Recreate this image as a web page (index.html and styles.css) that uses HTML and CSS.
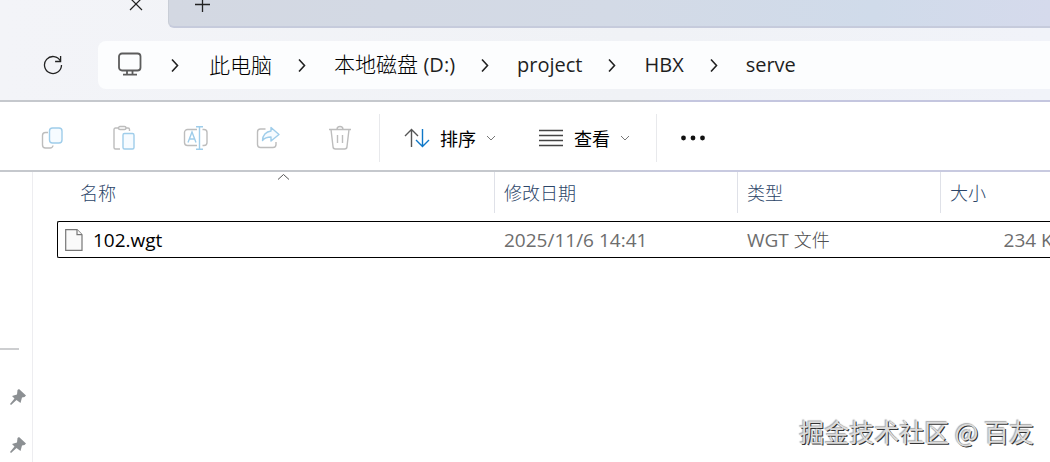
FILE: index.html
```
<!DOCTYPE html>
<html lang="zh-CN">
<head>
<meta charset="utf-8">
<meta name="viewport" content="width=device-width, initial-scale=1">
<title>serve</title>
<link rel="stylesheet" href="styles.css">
</head>
<body>
<div class="window">
  <header class="chrome">
    <div class="tabs">
      <div class="tab">
        <button class="icon-button" aria-label="关闭标签页"><svg width="14" height="14" viewBox="0 0 14 14"><path d="M1 1l12 12M13 1L1 13" stroke="#222" stroke-width="1.2" fill="none"/></svg></button>
      </div>
      <div class="tab-strip">
        <button class="icon-button" aria-label="新建标签页"><svg width="16" height="16" viewBox="0 0 16 16"><path d="M7.500 0v16M0 8.500h15" stroke="#222" stroke-width="1.300" fill="none"/></svg></button>
      </div>
    </div>
    <div class="address-row">
      <button class="icon-button refresh" aria-label="刷新"><svg width="20" height="20" viewBox="0 0 20 20" fill="none" stroke="#222" stroke-width="1.300"><path d="M17.500 6A8.500 8.500 0 1 0 18.500 10"/><path d="M17.600 1v5.500h-5.500"/></svg></button>
      <nav class="address" aria-label="路径">
        <svg class="pc" width="26" height="26" viewBox="0 0 26 26" fill="none" stroke="#5c5c5c" stroke-width="1.800"><rect x="2" y="1.500" width="21.500" height="17" rx="3"/><path d="M10 18.500v4M15.500 18.500v4M6 22.600h14"/></svg>
        <svg class="chevron" width="12" height="14" viewBox="0 0 12 14"><path d="M3 1.500L8.500 7.500 3 13.500"/></svg>
        <a href="#">此电脑</a>
        <svg class="chevron" width="12" height="14" viewBox="0 0 12 14"><path d="M3 1.500L8.500 7.500 3 13.500"/></svg>
        <a href="#">本地磁盘 <span class="latin">(D:)</span></a>
        <svg class="chevron" width="12" height="14" viewBox="0 0 12 14"><path d="M3 1.500L8.500 7.500 3 13.500"/></svg>
        <a href="#" class="latin">project</a>
        <svg class="chevron" width="12" height="14" viewBox="0 0 12 14"><path d="M3 1.500L8.500 7.500 3 13.500"/></svg>
        <a href="#" class="latin">HBX</a>
        <svg class="chevron" width="12" height="14" viewBox="0 0 12 14"><path d="M3 1.500L8.500 7.500 3 13.500"/></svg>
        <a href="#" class="latin">serve</a>
      </nav>
    </div>
  </header>

  <div class="toolbar" role="toolbar" aria-label="命令">
    <div class="group edit">
      <button class="icon-button" aria-label="复制" disabled><svg width="26" height="26" viewBox="0 0 26 26" fill="none" stroke-width="1.400"><path d="M9 7.500H6.500a3 3 0 0 0-3 3V20a3 3 0 0 0 3 3H11a3 3 0 0 0 3-2.500" stroke="#bdbdbd"/><rect x="10.500" y="3" width="12.500" height="15" rx="3" stroke="#9fcdea" fill="#f6fbff"/></svg></button>
      <button class="icon-button" aria-label="粘贴" disabled><svg width="26" height="26" viewBox="0 0 26 26" fill="none" stroke-width="1.400"><path d="M8 3H4.500a1.500 1.500 0 0 0-1.500 1.500v18A1.500 1.500 0 0 0 4.500 24H9M14.500 3H17a1.500 1.500 0 0 1 1.500 1.500V6" stroke="#bdbdbd"/><rect x="7.500" y="1.500" width="7.500" height="3" rx="1.500" stroke="#bdbdbd"/><rect x="12" y="8.500" width="11" height="15.500" rx="1.500" stroke="#9fcdea" fill="#f6fbff"/></svg></button>
      <button class="icon-button" aria-label="重命名" disabled><svg width="26" height="26" viewBox="0 0 26 26" fill="none" stroke-width="1.400"><path d="M14 4.500H4.500a3 3 0 0 0-3 3v10a3 3 0 0 0 3 3H14M19.500 4.500h1.500a3 3 0 0 1 3 3v10a3 3 0 0 1-3 3h-1.500" stroke="#bdbdbd"/><path d="M5 17.500l4-10.500 4 10.500M6.500 14h5M16.500 2v22M13 1.700h7M13 24.300h7" stroke="#9fcdea"/></svg></button>
      <button class="icon-button" aria-label="共享" disabled><svg width="26" height="26" viewBox="0 0 26 26" fill="none" stroke-width="1.400" stroke-linejoin="round"><path d="M10.500 4H5.500a3 3 0 0 0-3 3v12.500a3 3 0 0 0 3 3H18a3 3 0 0 0 3-3V17" stroke="#bdbdbd"/><path d="M16 2.500l8 7-8 6.500v-4c-4 0-6.500 1-8.500 3.500 0-5 3.500-9 8.500-9.500z" stroke="#9fcdea" fill="#f6fbff"/></svg></button>
      <button class="icon-button" aria-label="删除" disabled><svg width="26" height="26" viewBox="0 0 26 26" fill="none" stroke-width="1.400" stroke="#bdbdbd"><path d="M2 4.500h22M10 4.500a3 3 0 0 1 6 0M4 4.500l2 17a2.500 2.500 0 0 0 2.500 2.500h9a2.500 2.500 0 0 0 2.500-2.500l2-17M10.500 10v8M15.500 10v8"/></svg></button>
    </div>
    <div class="group">
      <button class="menu-button"><svg width="26" height="20" viewBox="0 0 26 20" fill="none" stroke-width="1.400"><path d="M7.500 19V1.500M1 8l6.500-6.500L14 8" stroke="#555"/><path d="M18.500 1v17.500M12 12l6.500 6.500L25 12" stroke="#0f78c8"/></svg><span>排序</span><svg class="caret" width="10" height="6" viewBox="0 0 10 6"><path d="M1 1l4 4 4-4"/></svg></button>
      <button class="menu-button view"><svg width="26" height="20" viewBox="0 0 26 20" fill="none" stroke="#444" stroke-width="1.300"><path d="M1 2.500h24M1 7.500h24M1 12.500h24M1 17.500h24"/></svg><span>查看</span><svg class="caret" width="10" height="6" viewBox="0 0 10 6"><path d="M1 1l4 4 4-4"/></svg></button>
    </div>
    <button class="icon-button more" aria-label="更多"><svg width="26" height="6" viewBox="0 0 26 6" fill="#111"><circle cx="3.500" cy="3" r="2.400"/><circle cx="13" cy="3" r="2.400"/><circle cx="22.500" cy="3" r="2.400"/></svg></button>
  </div>

  <div class="body">
    <aside class="sidebar">
      <hr>
      <button class="icon-button" aria-label="已固定"><svg width="18" height="18" viewBox="0 0 18 18"><path d="M10 1L17 7.500 15.500 9 13 9.500 11.500 15 7.500 12 2 17 1 16l4.500-5.500L3 8l5-1.500L8.500 2z" fill="#8c9093"/></svg></button>
      <button class="icon-button" aria-label="已固定"><svg width="18" height="18" viewBox="0 0 18 18"><path d="M10 1L17 7.500 15.500 9 13 9.500 11.500 15 7.500 12 2 17 1 16l4.500-5.500L3 8l5-1.500L8.500 2z" fill="#8c9093"/></svg></button>
    </aside>
    <main class="files">
      <table>
        <colgroup><col class="c-name"><col class="c-date"><col class="c-type"><col class="c-size"></colgroup>
        <thead>
          <tr>
            <th aria-sort="ascending"><div class="head name"><svg class="sort" width="14" height="8" viewBox="0 0 14 8"><path d="M2 6.500L7.500 1.500 13 6.500"/></svg>名称</div></th>
            <th><div class="head">修改日期</div></th>
            <th><div class="head">类型</div></th>
            <th><div class="head">大小</div></th>
          </tr>
        </thead>
        <tbody>
          <tr>
            <td><div class="file"><svg width="18" height="22" viewBox="0 0 18 22" fill="#fafafa" stroke="#777" stroke-width="1.200"><path d="M.700.700H12l5 5v15.600H.700z"/><path d="M12 .700v5h5"/></svg>102.wgt</div></td>
            <td>2025/11/6 14:41</td>
            <td>WGT <span class="cjk">文件</span></td>
            <td class="size">234 KB</td>
          </tr>
        </tbody>
      </table>
    </main>
  </div>
  <div class="watermark">掘金技术社区 @ 百友</div>
</div>
</body>
</html>
```
FILE: styles.css
```
* { box-sizing: border-box; }

body {
  margin: 0;
  background: #fff;
  color: #1b1b1b;
  font-family: "Open Sans", "Noto Sans CJK SC", sans-serif;
  font-size: 18px;
}

.window {
  position: relative;
  display: flex;
  flex-direction: column;
  min-height: 100vh;
  overflow: hidden;
}

svg { display: block; flex: none; }

button {
  display: flex;
  align-items: center;
  padding: 0;
  border: 0;
  background: none;
  color: inherit;
  font: inherit;
}

a { color: inherit; text-decoration: none; }

.chrome { background: linear-gradient(90deg, #f3f4f8, #f0f2f6 60%, #f1f3f9); }

.tabs { display: flex; height: 28px; }

.tab {
  display: flex;
  flex: 0 0 168px;
  justify-content: flex-end;
  align-items: flex-start;
  padding-right: 25px;
}

.tab .icon-button { margin-top: -3px; }

.tab-strip {
  flex: 1;
  padding-left: 26px;
  border-bottom: 2px solid #c6cbdc;
  border-left: 1px solid #c8cdd6;
  border-bottom-left-radius: 6px;
  background: linear-gradient(90deg, #d3d8e2, #d3dae6 50%, #d0dbea 80%, #d5daec);
}

.tab-strip .icon-button { margin-top: -4px; }

.address-row {
  display: flex;
  align-items: center;
  height: 74px;
  padding-top: 1px;
  border-bottom: 2px solid;
  border-image: linear-gradient(90deg, #c5c8cd 60%, #c4c6df 65%) 1;
}

.refresh { margin: 0 35px 0 43px; }

.address {
  display: flex;
  flex: 1;
  align-items: center;
  height: 48px;
  padding-left: 19px;
  border-radius: 8px 0 0 8px;
  background: #fcfdfe;
  font-size: 21px;
  font-weight: 300;
  line-height: 30px;
  white-space: nowrap;
  color: #000;
}

.latin { color: #1f1f1f; font-size: 20px; font-weight: 400; }

.chevron { margin: 0 26px 0 24px; fill: none; stroke: #222; stroke-width: 1.600; }
.pc + .chevron { margin: 0 28px 0 26px; }

.toolbar {
  display: flex;
  align-items: center;
  height: 70px;
  padding-top: 3px;
  border-bottom: 2px solid;
  border-image: linear-gradient(90deg, #c5c8cd 50%, #c8cae0 65%) 1;
}

.group {
  display: flex;
  align-items: center;
  height: 48px;
  border-right: 1px solid #e8e9ec;
}

.edit { gap: 46px; padding: 0 26px 0 39px; }

.menu-button { gap: 10px; margin-left: 24px; color: #000; }
.view { margin: 0 26px 0 42px; }

.caret { fill: none; stroke: #777; stroke-width: 1; }
.more { margin-left: 23px; }

.body { display: flex; flex: 1; }

.sidebar {
  display: flex;
  flex: 0 0 33px;
  flex-direction: column;
  gap: 30px;
  padding: 176px 0 0;
  border-right: 1px solid #ededf0;
}

.sidebar hr { width: 19px; height: 2px; margin: 0 0 8px; border: 0; background: #cdced0; }

.sidebar button { padding-left: 9px; }

.files { flex: 1; min-width: 0; padding-left: 24px; overflow: hidden; }

table { width: 1017px; table-layout: fixed; border-collapse: separate; border-spacing: 0; }

.c-name { width: 438px; }
.c-date { width: 243px; }
.c-type { width: 203px; }
.c-size { width: 133px; }

th { padding: 0 0 8px; color: #2c4568; font-weight: 300; text-align: left; }

.head {
  position: relative;
  height: 41px;
  padding-left: 9px;
  border-right: 1px solid #dfe1e8;
  line-height: 42px;
}

.head.name { padding-left: 23px; }

.sort { position: absolute; top: 1px; left: 50%; fill: none; stroke: #555; stroke-width: 1; }

td {
  height: 37px;
  padding: 0 9px;
  border: solid #000;
  border-width: 1px 0;
  color: #6d6d6d;
  font-size: 19px;
  line-height: 26px;
  white-space: nowrap;
}

.cjk { color: #505050; font-size: 18px; font-weight: 300; }

td:first-child { padding-left: 7px; border-left-width: 1px; border-radius: 2px 0 0 2px; color: #000; }

.file { display: flex; align-items: center; gap: 10px; }

.size { text-align: right; }

.watermark {
  position: absolute;
  right: 16px;
  bottom: 13px;
  color: #dcdcdc;
  font-family: "Noto Sans CJK SC", sans-serif;
  font-size: 25px;
  line-height: 36px;
  text-shadow: 1px 1px 0 #333, -1px -1px 1px #aaa;
}
```
